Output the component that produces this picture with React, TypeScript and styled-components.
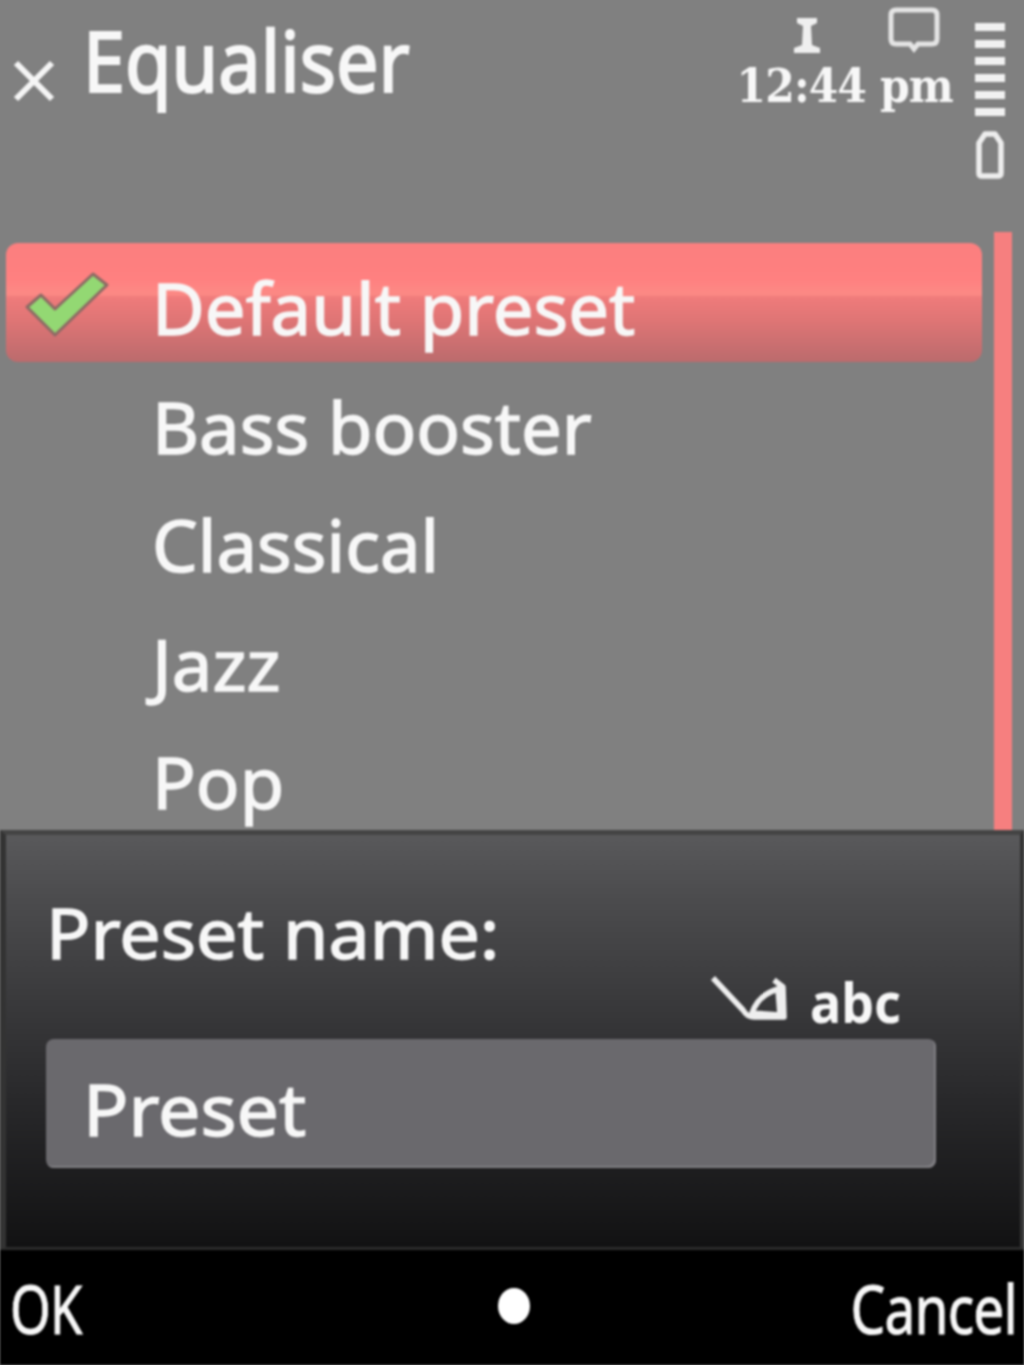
import React from "react";
import styled, { createGlobalStyle } from "styled-components";

const Global = createGlobalStyle`
  html, body { margin: 0; padding: 0; background: #808080; }
  #root { width: 1024px; height: 1365px; overflow: hidden; }
`;

const Screen = styled.div`
  width: 1024px;
  height: 1365px;
  display: flex;
  flex-direction: column;
  background: #808080;
  color: #f7f7f7;
  font-family: "Noto Sans", "Open Sans", sans-serif;
  overflow: hidden;
  filter: blur(0.9px);
`;

const Header = styled.header`
  height: 232px;
  flex: none;
  display: flex;
  justify-content: space-between;
  align-items: flex-start;
  padding: 0 17px 0 12px;
  box-sizing: border-box;
`;

const TitleGroup = styled.div`
  display: flex;
  align-items: flex-start;
`;

const CloseIcon = styled.svg`
  width: 44px;
  height: 44px;
  margin-top: 59px;
  flex: none;
`;

const Title = styled.h1`
  margin: 6px 0 0 27px;
  font-size: 84px;
  line-height: 108px;
  font-weight: 400;
  -webkit-text-stroke: 2.2px #f7f7f7;
  white-space: nowrap;
  transform: scaleX(0.9);
  transform-origin: left center;
`;

const Status = styled.div`
  display: flex;
  align-items: flex-start;
  gap: 20px;
`;

const ClockColumn = styled.div`
  display: flex;
  flex-direction: column;
  align-items: flex-end;
`;

const StatusIcons = styled.div`
  display: flex;
  align-items: flex-start;
  gap: 65px;
  margin: 7px 12px 0 0;
`;

const CursorIcon = styled.svg`
  width: 30px;
  height: 40px;
  margin-top: 8px;
`;

const MessageIcon = styled.svg`
  width: 54px;
  height: 46px;
`;

const Clock = styled.div`
  margin-top: 4px;
  font-family: "DejaVu Serif", "Liberation Serif", serif;
  font-size: 46px;
  line-height: 54px;
  font-weight: 700;
  white-space: nowrap;
  letter-spacing: -1px;
  transform: scaleX(0.925);
  transform-origin: right center;
`;

const SignalColumn = styled.div`
  display: flex;
  flex-direction: column;
  align-items: center;
  padding-top: 23px;
`;

const Bars = styled.div`
  display: flex;
  flex-direction: column;
  gap: 9px;
`;

const Bar = styled.span`
  display: block;
  width: 30px;
  height: 8px;
  background: #f1f1f1;
`;

const BatteryIcon = styled.svg`
  width: 34px;
  height: 52px;
  margin-top: 13px;
`;

const ListArea = styled.div`
  height: 598px;
  flex: none;
  display: flex;
  overflow: hidden;
`;

const List = styled.ul`
  flex: 1;
  margin: 0;
  padding: 11px 0 0 6px;
  list-style: none;
  overflow: hidden;
`;

const Row = styled.li<{ $selected?: boolean }>`
  position: relative;
  width: 976px;
  height: 118.5px;
  display: flex;
  align-items: center;
  padding: 12px 0 0 146px;
  box-sizing: border-box;
  border-radius: 12px;
  background: ${(p) =>
    p.$selected
      ? "linear-gradient(180deg,#fb7f7f 0%,#ff8080 30%,#fc8a85 43%,#ef7b7b 46%,#df7575 65%,#bb6b6d 100%)"
      : "transparent"};
`;

const RowText = styled.span`
  font-size: 71px;
  line-height: 106px;
  font-weight: 400;
  -webkit-text-stroke: 1.4px #f7f7f7;
  white-space: nowrap;
  transform: scaleX(1.02);
  transform-origin: left center;
`;

const CheckIcon = styled.svg`
  position: absolute;
  left: 15px;
  top: 26px;
  width: 92px;
  height: 72px;
`;

const Scrollbar = styled.div`
  width: 18px;
  flex: none;
  margin-right: 12px;
  background: #f67f7f;
`;

const Dialog = styled.section`
  height: 420px;
  flex: none;
  box-sizing: border-box;
  border-top: 5px solid #444;
  border-left: 6px solid #333;
  border-right: 4px solid #333;
  border-bottom: 3px solid #2c2c2c;
  padding: 0 84px 0 40px;
  background: linear-gradient(180deg,#59595b 0%,#4c4c4e 15%,#343436 48%,#28282a 65%,#121213 100%);
  display: flex;
  flex-direction: column;
`;

const PromptRow = styled.div`
  height: 204px;
  position: relative;
  flex: none;
`;

const Prompt = styled.div`
  position: absolute;
  left: 0;
  top: 49px;
  font-size: 69px;
  line-height: 96px;
  font-weight: 400;
  -webkit-text-stroke: 1.4px #f7f7f7;
  white-space: nowrap;
  transform: scaleX(1.065);
  transform-origin: left center;
`;

const InputMode = styled.div`
  position: absolute;
  right: 34px;
  top: 136px;
  display: flex;
  align-items: center;
  gap: 20px;
`;

const PenIcon = styled.svg`
  width: 80px;
  height: 52px;
`;

const ModeText = styled.span`
  font-size: 56px;
  line-height: 60px;
  font-weight: 700;
  transform: scaleX(0.93);
  transform-origin: left center;
  width: 92px;
`;

const Input = styled.div`
  height: 129px;
  flex: none;
  box-sizing: border-box;
  padding: 10px 0 0 37px;
  border-radius: 8px;
  background: #6a696d;
  box-shadow: inset -2px -2px 0 #807f83;
  display: flex;
  align-items: center;
`;

const InputText = styled.span`
  font-size: 71px;
  line-height: 106px;
  font-weight: 400;
  -webkit-text-stroke: 1.4px #f7f7f7;
  transform: scaleX(1.06);
  transform-origin: left center;
`;

const SoftKeys = styled.footer`
  flex: 1;
  background: #000;
  display: flex;
  align-items: center;
  justify-content: space-between;
  padding: 0 7px 0 10px;
`;

const SoftKey = styled.span<{ $end?: boolean }>`
  font-size: 68px;
  line-height: 80px;
  font-weight: 400;
  -webkit-text-stroke: 1px #f7f7f7;
  letter-spacing: -1px;
  white-space: nowrap;
  width: 220px;
  text-align: ${(p) => (p.$end ? "right" : "left")};
  transform: scaleX(${(p) => (p.$end ? 0.81 : 0.77)});
  transform-origin: ${(p) => (p.$end ? "right" : "left")} center;
`;

const Dot = styled.span`
  width: 32px;
  height: 36px;
  margin-bottom: 4px;
  border-radius: 50%;
  background: #fff;
`;

const rows = ["Default preset", "Bass booster", "Classical", "Jazz", "Pop"];

export default function App() {
  return (
    <>
      <Global />
      <Screen>
        <Header>
          <TitleGroup>
            <CloseIcon viewBox="0 0 44 44">
              <path d="M4 4 L40 40 M40 4 L4 40" stroke="#f5f5f5" strokeWidth="6" fill="none" />
            </CloseIcon>
            <Title>Equaliser</Title>
          </TitleGroup>
          <Status>
            <ClockColumn>
              <StatusIcons>
                <CursorIcon viewBox="0 0 30 40">
                  <path d="M5 3 H25 V8 L19 11 L20 30 L28 33 V38 H2 V33 L10 30 L11 11 L5 8 Z" fill="#efefef" />
                </CursorIcon>
                <MessageIcon viewBox="0 0 54 46">
                  <path d="M9 3 H45 Q50 3 50 8 V32 Q50 37 45 37 H31 L27 42 L23 37 H9 Q4 37 4 32 V8 Q4 3 9 3 Z" fill="none" stroke="#e4e4e4" strokeWidth="5" />
                </MessageIcon>
              </StatusIcons>
              <Clock>12:44 pm</Clock>
            </ClockColumn>
            <SignalColumn>
              <Bars>
                {[0, 1, 2, 3, 4, 5].map((i) => (
                  <Bar key={i} />
                ))}
              </Bars>
              <BatteryIcon viewBox="0 0 34 52">
                <path d="M6 14 L12 5 H22 L28 14 V44 Q28 47 25 47 H9 Q6 47 6 44 Z" fill="none" stroke="#ededed" strokeWidth="5.5" strokeLinejoin="round" />
              </BatteryIcon>
            </SignalColumn>
          </Status>
        </Header>
        <ListArea>
          <List>
            {rows.map((r, i) => (
              <Row key={r} $selected={i === 0}>
                {i === 0 && (
                  <CheckIcon viewBox="0 0 92 72">
                    <path d="M6 38 L34 66 L86 16 L72 5 L34 40 L20 26 Z" fill="#93d873" stroke="#8d6a64" strokeWidth="3" strokeLinejoin="round" />
                  </CheckIcon>
                )}
                <RowText>{r}</RowText>
              </Row>
            ))}
          </List>
          <Scrollbar />
        </ListArea>
        <Dialog>
          <PromptRow>
            <Prompt>Preset name:</Prompt>
            <InputMode>
              <PenIcon viewBox="0 0 80 52">
                <path d="M3 3 L33 35 Q37 42 44 42 H74 L73 12 L64 5 M42 38 Q48 20 68 14 L70 40 Z" fill="none" stroke="#eee" strokeWidth="5.5" strokeLinejoin="round" />
              </PenIcon>
              <ModeText>abc</ModeText>
            </InputMode>
          </PromptRow>
          <Input>
            <InputText>Preset</InputText>
          </Input>
        </Dialog>
        <SoftKeys>
          <SoftKey>OK</SoftKey>
          <Dot />
          <SoftKey $end>Cancel</SoftKey>
        </SoftKeys>
      </Screen>
    </>
  );
}
